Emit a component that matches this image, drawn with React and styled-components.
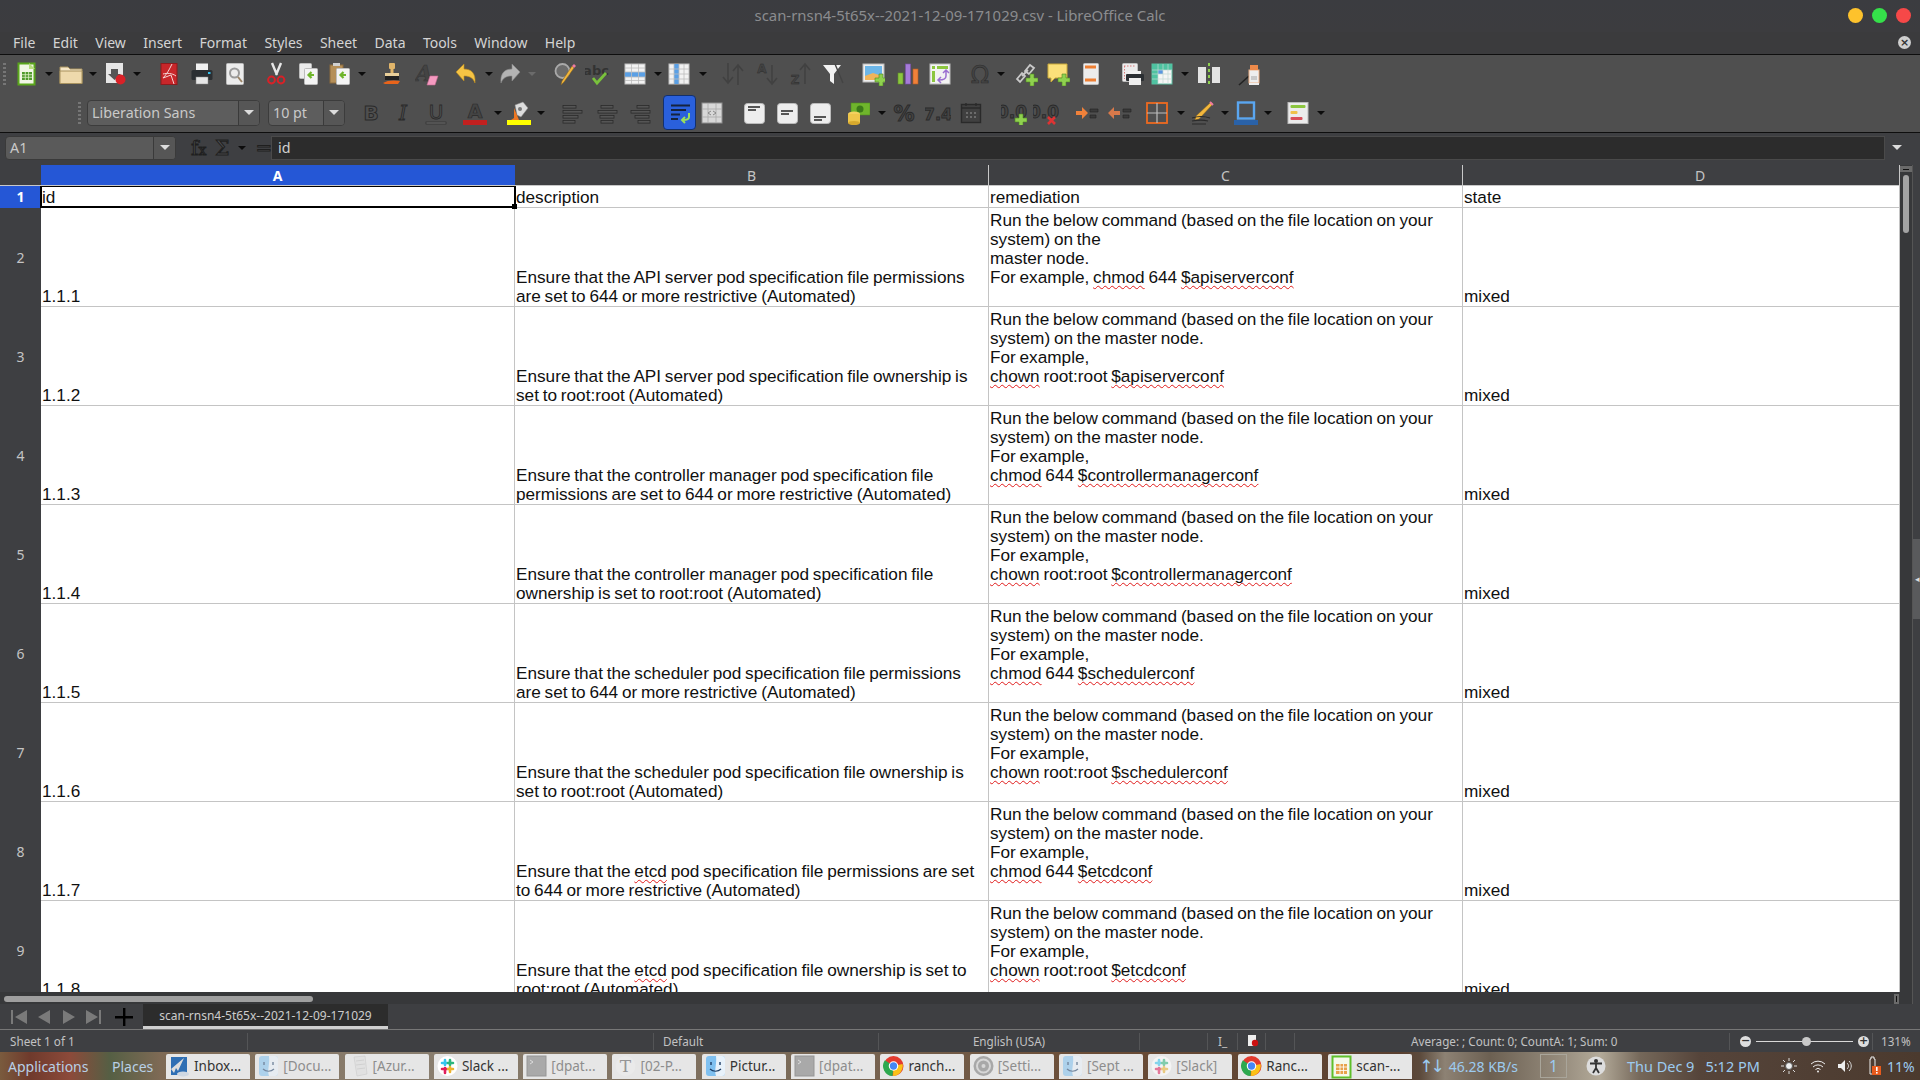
import React from 'react';
import styled, { createGlobalStyle } from 'styled-components';

const Global = createGlobalStyle`
  html, body { margin: 0; padding: 0; background: #3c3c3e; }
  body { font-family: "Noto Sans", "Open Sans", sans-serif; overflow: hidden; }
  * { box-sizing: border-box; }
`;

const Window = styled.div`
  width: 1920px;
  height: 1080px;
  display: flex;
  flex-direction: column;
  overflow: hidden;
  background: #3e3f42;
`;

/* ---------- title + menu ---------- */
const TitleBar = styled.div`
  height: 32px;
  flex: none;
  position: relative;
  display: flex;
  align-items: center;
  justify-content: center;
  padding-bottom: 2px;
  background: linear-gradient(#3b3c40, #3c3c3f);
  color: #8b8c8f;
  font-size: 14.9px;
`;
const Lights = styled.div`
  position: absolute;
  right: 9px;
  top: 8px;
  display: flex;
  gap: 9px;
`;
const Light = styled.span`
  width: 15px;
  height: 15px;
  border-radius: 50%;
  background: ${p => p.$c};
`;
const MenuBar = styled.div`
  height: 23px;
  flex: none;
  display: flex;
  align-items: center;
  gap: 17.4px;
  padding: 0 9px 1px 13px;
  background: #3b3b3d;
  border-bottom: 1px solid #0e0e0e;
  color: #d4d4d4;
  font-size: 14px;
`;
const CloseDoc = styled.span`
  margin-left: auto;
  width: 13px;
  height: 13px;
  border-radius: 50%;
  background: #cfcfcf;
  color: #333;
  font: bold 11px/13px "DejaVu Sans", sans-serif;
  text-align: center;
`;

/* ---------- toolbars ---------- */
const Toolbars = styled.div`
  flex: none;
  background: #4f4f4f;
  border-bottom: 1px solid #0e0e0e;
`;
const ToolRow = styled.div`
  height: ${p => p.$h}px;
  display: flex;
  align-items: center;
`;
const Slot = styled.div`
  flex: none;
  width: ${p => p.$w}px;
  height: 28px;
  margin-left: ${p => p.$ml}px;
  display: flex;
  align-items: center;
  justify-content: center;
`;
const Handle = styled.div`
  width: 3px;
  height: 22px;
  background-image: repeating-linear-gradient(#767676 0 2px, transparent 2px 4px);
`;
const Drop = styled.div`
  width: 0;
  height: 0;
  border-left: 4px solid transparent;
  border-right: 4px solid transparent;
  border-top: 4px solid ${p => p.$off ? '#6b6b6b' : '#0c0c0c'};
`;
const Combo = styled.div`
  width: 100%;
  height: 26px;
  display: flex;
  align-items: stretch;
  border: 1px solid #3c3c3c;
  border-radius: 4px;
  background: #5d5d5d;
  color: #c9c9c9;
  font-size: 14.3px;
  overflow: hidden;
`;
const ComboText = styled.div`
  flex: 1;
  display: flex;
  align-items: center;
  padding-left: ${p => p.$pad || 4}px;
`;
const ComboArrow = styled.div`
  flex: none;
  width: ${p => p.$w || 21}px;
  display: flex;
  align-items: center;
  justify-content: center;
  border-left: 1px solid #3a3a3a;
  background: #565656;
`;
const WhiteDown = styled.div`
  width: 0;
  height: 0;
  border-left: 5px solid transparent;
  border-right: 5px solid transparent;
  border-top: 5px solid #dcdcdc;
`;
const Active = styled.div`
  width: 33px;
  height: 35px;
  display: flex;
  align-items: center;
  justify-content: center;
  border-radius: 4px;
  border: 1px solid #12306e;
  background: #2a60dc;
`;

/* ---------- formula bar ---------- */
const FormulaBar = styled.div`
  height: 32px;
  flex: none;
  display: flex;
  align-items: center;
  padding: 0 0 3px 5px;
  background: #3e3f42;
`;
const NameBox = styled.div`
  width: 171px;
  height: 24px;
  flex: none;
  display: flex;
  border: 1px solid #3a3a3a;
  border-radius: 4px;
  background: #5a5a5a;
  color: #c9c9c9;
  font-size: 14.3px;
  overflow: hidden;
`;
const FormulaIcons = styled.div`
  width: 95px;
  flex: none;
  display: flex;
  align-items: center;
  padding-left: 15px;
  gap: 9px;
  font-family: "DejaVu Serif", serif;
  font-size: 20px;
`;
const Faint = styled.span`
  color: #4c4d50;
  -webkit-text-stroke: 1px #1f1f1f;
  & small { font-size: 14px; }
`;
const FormulaInput = styled.div`
  width: 1614px;
  height: 24px;
  flex: none;
  padding-left: 6px;
  background: #2c2c2c;
  border: 1px solid #4a4a4a;
  color: #d0d0d0;
  font-size: 14.3px;
  line-height: 22px;
`;
const FormulaDrop = styled.div`
  flex: 1;
  display: flex;
  justify-content: center;
  padding-right: 11px;
`;

/* ---------- sheet grid ---------- */
const Sheet = styled.div`
  flex: 1;
  min-height: 0;
  display: flex;
`;
const SheetMain = styled.div`
  width: 1900px;
  flex: none;
  display: flex;
  flex-direction: column;
`;
const HeaderRow = styled.div`
  height: 20px;
  flex: none;
  display: flex;
`;
const Corner = styled.div`
  width: 41px;
  flex: none;
`;
const ColHead = styled.div`
  width: ${p => p.$w}px;
  flex: none;
  display: flex;
  align-items: center;
  justify-content: center;
  padding-left: ${p => p.$shift || 0}px;
  background: ${p => p.$sel ? '#2557d6' : '#3e3f42'};
  color: ${p => p.$sel ? '#fff' : '#c4c4c4'};
  font-weight: ${p => p.$sel ? 700 : 400};
  font-size: 14px;
  border-right: 1px solid ${p => p.$sel ? '#2557d6' : '#c8c8c8'};
`;
const Rows = styled.div`
  flex: 1;
  min-height: 0;
  overflow: hidden;
  border-top: 1px solid #c8c8c8;
`;
const Row = styled.div`
  height: ${p => p.$h}px;
  display: flex;
`;
const RowHead = styled.div`
  width: 41px;
  flex: none;
  display: flex;
  align-items: center;
  justify-content: center;
  background: ${p => p.$sel ? '#2557d6' : '#3e3f42'};
  color: ${p => p.$sel ? '#fff' : '#c4c4c4'};
  font-weight: ${p => p.$sel ? 700 : 400};
  font-size: 14px;
`;
const Cell = styled.div`
  position: relative;
  width: ${p => p.$w}px;
  flex: none;
  display: flex;
  align-items: ${p => p.$top ? 'flex-start' : 'flex-end'};
  padding: ${p => p.$top ? '3px 2px 0 1px' : '0 2px 0 1px'};
  background: #fff;
  border-right: 1px solid #c4c4c4;
  border-bottom: 1px solid #c4c4c4;
  color: #101010;
  font-family: "Liberation Sans", Arial, sans-serif;
  font-size: 17.2px;
  word-spacing: -1px;
  line-height: 19px;
  white-space: pre-wrap;
`;
const Selected = styled.div`
  position: absolute;
  z-index: 2;
  inset: -1px -2px -1px -1px;
  border: 2px solid #000;
`;
const FillHandle = styled.div`
  position: absolute;
  right: -3px;
  bottom: -3px;
  width: 5px;
  height: 5px;
  background: #000;
`;
const Sq = styled.span`
  text-decoration: underline wavy #e01b1b 1px;
  text-decoration-skip-ink: none;
  text-underline-offset: 2px;
`;
const VScroll = styled.div`
  width: 12px;
  flex: none;
  display: flex;
  flex-direction: column;
  align-items: center;
  padding-top: 1px;
  background: #37383a;
`;
const VStop = styled.div`
  width: 12px;
  height: 6px;
  background: #6a6a6a;
  display: flex;
  align-items: center;
  justify-content: center;
  &::after { content: ''; width: 6px; height: 1px; background: #111; }
`;
const VThumb = styled.div`
  width: 6px;
  height: 58px;
  margin-top: 3px;
  border-radius: 3px;
  background: #a3a3a3;
`;
const SidePanel = styled.div`
  flex: 1;
  display: flex;
  align-items: center;
  padding-bottom: 12px;
  background: #3e3f42;
  border-left: 1px solid #555;
`;
const SideHandle = styled.div`
  width: 8px;
  height: 80px;
  display: flex;
  align-items: center;
  justify-content: center;
  background: #595a5c;
  color: #ddd;
  font-size: 9px;
`;

/* ---------- bottom bars ---------- */
const HScroll = styled.div`
  height: 12px;
  flex: none;
  display: flex;
  align-items: center;
  justify-content: space-between;
  padding: 2px 0 0 4px;
  background: #37383a;
`;
const HThumb = styled.div`
  width: 309px;
  height: 6px;
  border-radius: 3px;
  background: #9f9f9f;
`;
const HEnd = styled.div`
  width: 5px;
  height: 10px;
  margin-right: 1px;
  background: #6a6a6a;
  display: flex;
  align-items: center;
  justify-content: center;
  &::after { content: ''; width: 1px; height: 6px; background: #111; }
`;
const TabBar = styled.div`
  height: 25px;
  flex: none;
  display: flex;
  align-items: center;
  padding-left: 6px;
  background: #3e3f42;
`;
const NavSlot = styled.span`
  width: 25px;
  flex: none;
  display: flex;
  justify-content: center;
`;
const AddSheet = styled.span`
  flex: none;
  display: flex;
  margin-left: 8px;
`;
const Tab = styled.div`
  width: 245px;
  height: 25px;
  flex: none;
  margin-left: 9px;
  display: flex;
  align-items: center;
  justify-content: center;
  background: #2c2c2c;
  border-bottom: 3px solid #cfcfcf;
  color: #cdcdcd;
  font-size: 12px;
`;
const StatusBar = styled.div`
  height: 23px;
  flex: none;
  display: flex;
  align-items: center;
  border-top: 1px solid #777;
  background: #3e3f42;
  color: #c2c2c2;
  font-size: 11.7px;
`;
const StatusCell = styled.div`
  width: ${p => p.$w}px;
  height: 17px;
  flex: none;
  display: flex;
  align-items: center;
  justify-content: ${p => p.$align || 'flex-start'};
  padding-left: ${p => p.$pad || 0}px;
  border-right: ${p => p.$last ? 'none' : '1px solid #545557'};
`;
const ZoomRound = styled.span`
  width: 11px;
  height: 11px;
  flex: none;
  border-radius: 50%;
  background: #dedede;
  color: #333;
  font: bold 11px/10px "DejaVu Sans", sans-serif;
  text-align: center;
`;
const ZoomTrack = styled.span`
  position: relative;
  width: 97px;
  height: 1px;
  margin: 0 5px;
  background: #d8d8d8;
`;
const ZoomThumb = styled.span`
  position: absolute;
  left: 46px;
  top: -4px;
  width: 9px;
  height: 9px;
  border-radius: 50%;
  background: #c8c8c8;
`;

/* ---------- desktop panel ---------- */
const Panel = styled.div`
  height: 28px;
  flex: none;
  display: flex;
  align-items: center;
  padding-left: 8px;
  color: #b8d0e6;
  font-size: 14px;
  background: linear-gradient(90deg,
    #7a5b3e 0, #6f3a2c 30px, #8c4a3a 70px, #555f44 110px, #7e6a55 160px,
    #8a7f70 400px, #7a6a58 800px, #6a4c36 1100px, #5a4030 1400px,
    #5c4a3c 1420px, #8d8274 1445px, #6c6052 1490px, #958b7c 1560px,
    #b3aa99 1600px, #75685a 1640px, #55443a 1700px, #4b3a2e 1920px);
`;
const PanelLabel = styled.span`
  flex: none;
  width: ${p => p.$w}px;
`;
const Task = styled.div`
  width: 84px;
  height: 25px;
  flex: none;
  margin-left: ${p => p.$ml}px;
  display: flex;
  align-items: center;
  gap: 4px;
  padding-left: 3px;
  border-radius: 2px 2px 0 0;
  background: #e6e6e6;
  color: ${p => p.$dim ? '#8d8d8d' : '#333'};
  font-size: 13.5px;
  white-space: nowrap;
  overflow: hidden;
`;
const TaskIcon = styled.span`
  width: 21px;
  height: 22px;
  flex: none;
  display: flex;
  opacity: ${p => p.$dim ? 0.55 : 1};
`;
const Tray = styled.div`
  flex: 1;
  display: flex;
  align-items: center;
  color: #9ccbf0;
  font-size: 15.5px;
`;
const TrayItem = styled.span`
  flex: none;
  margin-left: ${p => p.$ml}px;
  display: flex;
  align-items: center;
  white-space: nowrap;
  font-size: ${p => p.$size || 15.5}px;
`;
const Arrows = styled.span`
  font-family: "DejaVu Sans", sans-serif;
  font-size: 17px;
  letter-spacing: -3px;
  margin-right: 7px;
`;
const Workspace = styled.span`
  width: 27px;
  height: 24px;
  flex: none;
  margin-left: 22px;
  border: 1px solid #a9a59a;
  text-align: center;
  line-height: 22px;
`;

/* ---------- icons ---------- */
const Svg = ({ children, w = 24, h = 24 }) => (
  <svg width={w} height={h} viewBox={`0 0 ${w} ${h}`} fill="none">{children}</svg>
);
const Plus = ({ x, y }) => (
  <path d={`M${x - 2} ${y - 6}h4v4h4v4h-4v4h-4v-4h-4v-4h4z`} fill="#8fd14f" stroke="#4d8c1e" strokeWidth=".6" />
);
const Paper = ({ x = 5, y = 2, w = 14, h = 20, fill = '#ececec' }) => (
  <rect x={x + .5} y={y + .5} width={w} height={h} rx="1" fill={fill} stroke="#bdbdbd" />
);
const AlignLines = ({ v }) => {
  const xs = { l: [[4, 13], [4, 19], [4, 15], [4, 12]], c: [[7, 12], [4, 19], [6, 14], [7, 12]], r: [[10, 12], [4, 19], [8, 14], [11, 12]] }[v];
  return (
    <Svg>
      {xs.map(([x, w], i) => (
        <rect key={i} x={x} y={4.5 + i * 5} width={w} height="2.6" fill="#555" stroke="#2b2b2b" strokeWidth=".8" />
      ))}
    </Svg>
  );
};
const VAlign = ({ ys }) => (
  <Svg>
    <rect x="2.5" y="2.5" width="20" height="20" rx="3" fill="#ededed" stroke="#bbb" />
    <rect x="6" y={ys} width="12" height="2" fill="#555" />
    <rect x="6" y={ys + 3} width="8" height="2" fill="#555" />
  </Svg>
);
const Glyph = ({ t, size = 22, y = 19, x = 12, style, font = 'DejaVu Sans', weight = 'bold' }) => (
  <text x={x} y={y} textAnchor="middle" fontFamily={font} fontSize={size} fontWeight={weight} fontStyle={style}
    fill="#444" stroke="#2a2a2a" strokeWidth=".9">{t}</text>
);
const ArrowVert = ({ x, up }) => (
  <path d={up ? `M${x} 23V3M${x - 5} 9l5-6 5 6` : `M${x} 1v20M${x - 5} 15l5 6 5-6`} stroke="#414141" strokeWidth="1.6" />
);

const Icons = {
  newCalc: <Svg><rect x="3.5" y="1.5" width="16" height="21" fill="#f2f7e6" stroke="#5aa61c" strokeWidth="2" /><path d="M14 1l6 6h-6z" fill="#b6dd7e" /><rect x="7" y="10" width="10" height="8" fill="#4f9a2c" /><path d="M7 12.7h10M7 15.3h10M10.3 10v8M13.6 10v8" stroke="#dff0c8" strokeWidth=".8" /></Svg>,
  open: <Svg><path d="M1 5h8l2 2h12v14.5H1z" fill="#f5e6c6" stroke="#a8925f" /><path d="M1 9h22v12.5H1z" fill="#eed9ac" stroke="#a8925f" /></Svg>,
  save: <Svg><rect x="2" y="1" width="17" height="20" fill="#e6e6e6" /><path d="M7 7h7v5h3l-6.5 6L4 12h3z" fill="#555" /><circle cx="16.5" cy="17.5" r="5" fill="#d92127" /></Svg>,
  pdf: <Svg><rect x="4" y="1.5" width="16" height="21" fill="#c8262a" stroke="#8d1a1d" /><path d="M15 2c-3 6-5 10-9 14l8-3 3 9M6 12c4-1 9-1 13 2" stroke="#f4d5d5" strokeWidth="1" /></Svg>,
  print: <Svg><rect x="6" y="1.5" width="12" height="8" fill="#f1f1f1" /><rect x="1.5" y="8" width="21" height="10" rx="1.5" fill="#2b2f33" /><rect x="18" y="10" width="2.5" height="2" fill="#35c0ee" /><rect x="6" y="15" width="12" height="7" fill="#e7e7e7" stroke="#888" strokeWidth=".5" /></Svg>,
  preview: <Svg><Paper x={3} y={1} w={17} h={21} /><circle cx="11.5" cy="11" r="4.5" stroke="#9a9a9a" strokeWidth="2" /><path d="M15 15l4 5" stroke="#9b8466" strokeWidth="2" /></Svg>,
  cut: <Svg><path d="M8 1l5 12M17 1l-5 12" stroke="#e8e8e8" strokeWidth="2.4" /><circle cx="7.5" cy="18" r="3.4" stroke="#d92127" strokeWidth="2" /><circle cx="17" cy="18" r="3.4" stroke="#d92127" strokeWidth="2" /></Svg>,
  copy: <Svg><Paper x={2} y={1} w={12} h={15} /><Paper x={7} y={6} w={13} h={16} fill="#f4f4f4" /><path d="M17 13h-5m2.5-3l-3 3 3 3" stroke="#6fb52c" strokeWidth="2.2" /></Svg>,
  paste: <Svg><rect x="2" y="3" width="13" height="18" fill="#b58f58" stroke="#8a6b3f" /><rect x="5" y="1" width="7" height="3" fill="#d0d0d0" /><Paper x={8} y={6} w={13} h={16} fill="#f4f4f4" /><path d="M18 13h-5m2.5-3l-3 3 3 3" stroke="#6fb52c" strokeWidth="2.2" /></Svg>,
  clone: <Svg><rect x="9" y="1" width="6" height="6" rx="1" fill="#e0b56a" /><rect x="10.5" y="6" width="3" height="6" fill="#e0b56a" /><rect x="5" y="11" width="14" height="3" fill="#e9cf9a" /><rect x="5" y="14" width="14" height="4" fill="#222" /><path d="M3 21c4-3 12-3 17-2l-2 3H5z" fill="#e8641b" /></Svg>,
  clear: <Svg><text x="9" y="19" textAnchor="middle" fontFamily="DejaVu Serif" fontStyle="italic" fontWeight="bold" fontSize="22" fill="#444" stroke="#333" strokeWidth=".5">A</text><path d="M15 14h8l-3 9h-8z" fill="#f59ac0" stroke="#c26a91" strokeWidth=".6" /></Svg>,
  undo: <Svg><path d="M2 10l8-8v5c7 0 12 4 11 14-2-5-5-7-11-7v5z" fill="#f5c344" stroke="#b98a1e" strokeWidth=".6" /></Svg>,
  redo: <Svg><path d="M22 10l-8-8v5C7 7 2 11 3 21c2-5 5-7 11-7v5z" fill="#b4b4b4" stroke="#8a8a8a" strokeWidth=".6" /></Svg>,
  find: <Svg><circle cx="9.5" cy="9" r="7" fill="#6b6b6b" stroke="#a9a9a9" strokeWidth="1.8" /><path d="M21 6L11 20l-3 3 1-4L19 4z" fill="#f3b73c" stroke="#7f5f1f" strokeWidth=".5" /><path d="M19 4l2 2 2-2-2-2z" fill="#ee7aa0" /></Svg>,
  spell: <Svg><text x="11" y="13" textAnchor="middle" fontFamily="DejaVu Sans" fontWeight="bold" fontSize="13" fill="#333">abc</text><path d="M8 16l4 5 9-10" stroke="#79c13c" strokeWidth="2.8" /></Svg>,
  rows: <Svg><rect x="2" y="2" width="20" height="20" fill="#f2f2f2" stroke="#c0c0c0" /><rect x="2" y="10" width="20" height="5" fill="#5aa0e6" /><path d="M2 6h20M2 10h20M2 15h20M2 18.5h20M8.5 2v20M15.5 2v20" stroke="#bdbdbd" strokeWidth=".8" /></Svg>,
  cols: <Svg><rect x="2" y="2" width="20" height="20" fill="#f2f2f2" stroke="#c0c0c0" /><rect x="7" y="2" width="5" height="20" fill="#5aa0e6" /><path d="M7 2v20M12 2v20M17 2v20M2 7h20M2 12h20M2 17h20" stroke="#bdbdbd" strokeWidth=".8" /></Svg>,
  sort: <Svg><ArrowVert x={7} /><ArrowVert x={17} up /></Svg>,
  az: <Svg><text x="7" y="11" textAnchor="middle" fontFamily="DejaVu Sans" fontWeight="bold" fontSize="12" fill="#444" stroke="#2a2a2a" strokeWidth=".4">A</text><path d="M17 3v19m-5-6l5 6 5-6" stroke="#414141" strokeWidth="1.6" /></Svg>,
  za: <Svg><text x="7" y="22" textAnchor="middle" fontFamily="DejaVu Sans" fontWeight="bold" fontSize="12" fill="#444" stroke="#2a2a2a" strokeWidth=".4">Z</text><path d="M17 22V2m-5 6l5-6 5 6" stroke="#414141" strokeWidth="1.6" /></Svg>,
  filter: <Svg><path d="M2 3h18l-7 9v10l-4-3v-7z" fill="#f2f2f2" /><path d="M14 2l8 19" stroke="#444" strokeWidth="1.4" /></Svg>,
  image: <Svg><rect x="2" y="2" width="21" height="18" fill="#eee" stroke="#bbb" /><rect x="4" y="4" width="17" height="14" fill="#6cb6e8" /><path d="M4 14l8-3 9 3v4H4z" fill="#f0b45a" /><Plus x={20} y={18} /></Svg>,
  chart: <Svg><rect x="2" y="11" width="5" height="11" fill="#8cc63f" stroke="#5f8f23" strokeWidth=".6" /><rect x="9.5" y="2" width="5" height="20" fill="#a67bd8" stroke="#7951ad" strokeWidth=".6" /><rect x="17" y="7" width="5" height="15" fill="#f0813a" stroke="#b85c22" strokeWidth=".6" /></Svg>,
  pivot: <Svg><rect x="2" y="2" width="20" height="20" fill="#f2f2f2" stroke="#bbb" /><rect x="9" y="4" width="11" height="3" fill="#8cc63f" /><rect x="4" y="4" width="3" height="3" fill="#8cc63f" /><rect x="4" y="9" width="3" height="11" fill="#8cc63f" /><path d="M18 9v5c0 3-3 4-7 4m2-3l-3 3 3 3M15 11l3-3 3 3" stroke="#9b6fd0" strokeWidth="1.5" /></Svg>,
  omega: <Svg><text x="12" y="21" textAnchor="middle" fontFamily="DejaVu Sans" fontSize="24" fill="#444" stroke="#2d2d2d" strokeWidth=".6">Ω</text></Svg>,
  link: <Svg><path d="M3 17l5-6 3 3-5 6zM11 9l5-6 4 3-5 6zM8 14l6-6" stroke="#c9c9c9" strokeWidth="1.8" /><Plus x={18} y={18} /></Svg>,
  comment: <Svg><path d="M2 2h19v14H9l-4 4v-4H2z" fill="#fbe07a" stroke="#c9a93a" /><Plus x={18} y={18} /></Svg>,
  header: <Svg><Paper x={4} y={1} w={15} h={21} /><rect x="6" y="3.5" width="11" height="3" fill="#ee7f33" /><rect x="6" y="16.5" width="11" height="3" fill="#ee7f33" /></Svg>,
  printArea: <Svg><Paper x={1} y={1} w={15} h={18} /><path d="M3 4h11M3.5 4v13" stroke="#d97a7a" strokeDasharray="1.5 1.5" /><rect x="7" y="9" width="13" height="4" fill="#f1f1f1" /><rect x="5" y="12" width="18" height="7" rx="1" fill="#2b2f33" /><rect x="8" y="16" width="12" height="7" fill="#eee" /></Svg>,
  freeze: <Svg><rect x="2" y="2" width="20" height="20" fill="#f5f5f5" stroke="#5cc0a4" /><rect x="2" y="2" width="20" height="6" fill="#4fc3a1" /><rect x="2" y="2" width="6" height="20" fill="#4fc3a1" /><rect x="8" y="8" width="5" height="4" fill="#5a96e0" /><path d="M8 2v20M13 2v20M18 2v20M2 8h20M2 12h20M2 17h20" stroke="#c2d8d2" strokeWidth=".7" /></Svg>,
  split: <Svg><rect x="1" y="5" width="8" height="16" fill="#e3e3e3" /><rect x="15" y="5" width="8" height="16" fill="#e3e3e3" /><path d="M12 1v22" stroke="#8fd14f" strokeWidth="2" strokeDasharray="3 3" /></Svg>,
  form: <Svg><path d="M1 23l10-9" stroke="#222" strokeWidth="1.6" /><rect x="11" y="8" width="10" height="13" fill="#eee" stroke="#f0b48a" /><rect x="12" y="3" width="8" height="5" fill="#ee8a4a" /><rect x="13" y="14" width="6" height="4" fill="#c9c9c9" /><rect x="11" y="21" width="10" height="2" fill="#eee" /></Svg>,
  fontColor: <Svg><text x="12" y="17" textAnchor="middle" fontFamily="DejaVu Sans" fontWeight="bold" fontSize="19" fill="#444" stroke="#2a2a2a" strokeWidth=".7">A</text><rect y="19" width="24" height="5" fill="#c2201f" /></Svg>,
  bgColor: <Svg><path d="M8 4l8-3 5 6-7 9-4-2z" fill="#ddd" stroke="#888" strokeWidth=".5" /><circle cx="13" cy="8" r="2" fill="#777" /><path d="M7 7v10l-3 2h8z" fill="#ee7722" /><rect y="19" width="24" height="5" fill="#ffff00" /></Svg>,
  alignL: <AlignLines v="l" />,
  alignC: <AlignLines v="c" />,
  alignR: <AlignLines v="r" />,
  wrap: <Svg><path d="M3 4.5h19M3 9h15M3 13.5h9M3 18h7" stroke="#15233f" strokeWidth="2" /><path d="M21 12v4c0 2-2 3-6 3m2-3l-3 3 3 3" stroke="#9be05a" strokeWidth="2" /></Svg>,
  merge: <Svg><rect x="2" y="2" width="20" height="20" fill="#d8d8d8" stroke="#8f8f8f" /><path d="M2 8h20M2 16h20M8 2v20M16 2v20" stroke="#aaa" strokeWidth=".8" /><path d="M11 10l-3 2 3 2M13 10l3 2-3 2" stroke="#888" strokeWidth="1" /></Svg>,
  vTop: <VAlign ys={5} />,
  vMid: <VAlign ys={9} />,
  vBot: <VAlign ys={15} />,
  currency: <Svg><rect x="5" y="2" width="19" height="12" fill="#6fb52c" stroke="#4d8c1e" strokeWidth=".6" /><circle cx="14" cy="8" r="3.5" fill="#3c7a19" /><ellipse cx="8" cy="13" rx="6" ry="2.5" fill="#f3d15f" /><rect x="2" y="13" width="12" height="9" fill="#eec64a" /><ellipse cx="8" cy="22" rx="6" ry="2" fill="#d7a92d" /></Svg>,
  percent: <Svg><Glyph t="%" size={21} y={20} /></Svg>,
  number: <Svg w={26}><Glyph t="7.4" size={16} y={19} x={13} /></Svg>,
  date: <Svg><rect x="2.5" y="3.5" width="19" height="18" fill="#404040" stroke="#2a2a2a" strokeWidth="1.4" /><path d="M2.5 7h19M7 2v3M17 2v3" stroke="#2a2a2a" strokeWidth="1.4" /><path d="M7 12h2M11 12h2M15 12h2M7 16h2M11 16h2M15 16h2" stroke="#7a7a7a" strokeWidth="1.6" /></Svg>,
  decAdd: <Svg w={26}><Glyph t="0.0" size={17} y={17} x={11} /><Plus x={20} y={19} /></Svg>,
  decDel: <Svg w={26}><Glyph t="0.0" size={17} y={17} x={11} /><path d="M15 16l7 7m0-7l-7 7" stroke="#d33" strokeWidth="2.6" /></Svg>,
  indent: <Svg><path d="M1 10h6V6l6 6-6 6v-4H1z" fill="#f0813a" /><path d="M15 8h8v3h-8zM15 14h6v3h-6z" fill="#3a3a3a" stroke="#222" strokeWidth=".6" /></Svg>,
  outdent: <Svg><path d="M12 10H6V6l-6 6 6 6v-4h6z" fill="#d9794a" /><path d="M15 8h8v3h-8zM15 14h6v3h-6z" fill="#3a3a3a" stroke="#222" strokeWidth=".6" /></Svg>,
  borders: <Svg><rect x="2" y="2" width="20" height="20" fill="#4f4f4f" stroke="#ee6a20" strokeWidth="1.8" /><path d="M12 2v20M2 12h20" stroke="#bdbdbd" strokeWidth="1.2" /></Svg>,
  lineStyle: <Svg><path d="M21 1l2 2-14 15-4 1 1-4z" fill="#f3b73c" stroke="#7f5f1f" strokeWidth=".5" /><path d="M20 1l3 3" stroke="#ee7aa0" strokeWidth="2" /><path d="M2 17c6-2 12-2 18 0M2 20c6-1 12-1 16 0M2 23h14" stroke="#2a2a2a" strokeWidth="1.2" /></Svg>,
  borderColor: <Svg><rect x="4" y="1.5" width="16" height="16" fill="#4f4f4f" stroke="#5aa6f0" strokeWidth="2.4" /><rect y="19" width="24" height="5" fill="#2a62a8" /></Svg>,
  cond: <Svg><rect x="2" y="1.5" width="20" height="21" fill="#ececec" stroke="#bbb" /><rect x="4.5" y="4" width="15" height="3" rx="1" fill="#8cc63f" /><rect x="4.5" y="10" width="7" height="3" rx="1" fill="#f0c24a" /><rect x="4.5" y="16" width="12" height="3" rx="1" fill="#d9505a" /></Svg>,
};

const wrapUp = (rows) => {
  let right = 0;
  return rows.map(r => {
    const [el, x, w = 24] = r;
    const left = x - w / 2;
    const ml = left - right;
    right = left + w;
    return { el, ml, w };
  });
};

const I = name => Icons[name];
const D = (off) => <Drop $off={off} />;

const rowOne = wrapUp([
  [<Handle />, 4, 4], [I('newCalc'), 27], [D(), 49, 8], [I('open'), 71], [D(), 93, 8], [I('save'), 116], [D(), 137, 8],
  [I('pdf'), 169], [I('print'), 202], [I('preview'), 235], [I('cut'), 276], [I('copy'), 309], [I('paste'), 340], [D(), 362, 8],
  [I('clone'), 392], [I('clear'), 427], [I('undo'), 466], [D(), 489, 8], [I('redo'), 510], [D(true), 532, 8],
  [I('find'), 565], [I('spell'), 597], [I('rows'), 635], [D(), 658, 8], [I('cols'), 679], [D(), 703, 8],
  [I('sort'), 733], [I('az'), 767], [I('za'), 800], [I('filter'), 833], [I('image'), 873], [I('chart'), 908], [I('pivot'), 940],
  [I('omega'), 980], [D(), 1001, 8], [I('link'), 1026], [I('comment'), 1058], [I('header'), 1091], [I('printArea'), 1133],
  [I('freeze'), 1162], [D(), 1185, 8], [I('split'), 1209], [I('form'), 1250],
]);

const fontCombo = (
  <Combo>
    <ComboText>Liberation Sans</ComboText>
    <ComboArrow><WhiteDown /></ComboArrow>
  </Combo>
);
const sizeCombo = (
  <Combo>
    <ComboText>10 pt</ComboText>
    <ComboArrow><WhiteDown /></ComboArrow>
  </Combo>
);
const boldIcon = <Svg><text x="12" y="19" textAnchor="middle" fontFamily="DejaVu Sans" fontWeight="bold" fontSize="20" fill="#4f4f4f" stroke="#2a2a2a" strokeWidth="1">B</text></Svg>;
const italicIcon = <Svg><text x="12" y="19" textAnchor="middle" fontFamily="DejaVu Serif" fontStyle="italic" fontSize="20" fill="#4f4f4f" stroke="#2a2a2a" strokeWidth=".9">I</text></Svg>;
const underIcon = <Svg><text x="12" y="18" textAnchor="middle" fontFamily="DejaVu Sans" fontSize="20" fill="#4f4f4f" stroke="#2a2a2a" strokeWidth=".8">U</text><rect x="2" y="21" width="20" height="2" fill="#666" stroke="#2a2a2a" strokeWidth=".6" /></Svg>;

const rowTwo = wrapUp([
  [<Handle />, 79, 4], [fontCombo, 173.5, 173], [sizeCombo, 306.5, 77],
  [boldIcon, 371], [italicIcon, 403], [underIcon, 436], [I('fontColor'), 475], [D(), 498, 8], [I('bgColor'), 519], [D(), 541, 8],
  [I('alignL'), 571], [I('alignC'), 606], [I('alignR'), 639],
  [<Active>{I('wrap')}</Active>, 679.5, 33], [I('merge'), 712], [I('vTop'), 754], [I('vMid'), 787], [I('vBot'), 820],
  [I('currency'), 858], [D(), 882, 8], [I('percent'), 904], [I('number'), 938, 26], [I('date'), 971], [I('decAdd'), 1014, 26], [I('decDel'), 1046, 26],
  [I('indent'), 1087], [I('outdent'), 1120], [I('borders'), 1157], [D(), 1181, 8], [I('lineStyle'), 1202], [D(), 1225, 8],
  [I('borderColor'), 1246], [D(), 1268, 8], [I('cond'), 1298], [D(), 1321, 8],
]);

/* ---------- data ---------- */
const MENUS = ['File', 'Edit', 'View', 'Insert', 'Format', 'Styles', 'Sheet', 'Data', 'Tools', 'Window', 'Help'];
const COLS = [['A', 474, true], ['B', 474], ['C', 474], ['D', 437, false, 38]];
const INTRO = 'Run the below command (based on the file location on your system) on the master node.\nFor example,\n';

const chmod = conf => <><Sq>chmod</Sq> 644 <Sq>{conf}</Sq></>;
const chown = conf => <><Sq>chown</Sq> root:root <Sq>{conf}</Sq></>;

const ROWS = [
  { id: '1.1.1', desc: 'Ensure that the API server pod specification file permissions are set to 644 or more restrictive (Automated)',
    rem: <>{'Run the below command (based on the file location on your system) on the\nmaster node.\nFor example, '}{chmod('$apiserverconf')}</> },
  { id: '1.1.2', desc: 'Ensure that the API server pod specification file ownership is set to root:root (Automated)', rem: <>{INTRO}{chown('$apiserverconf')}</> },
  { id: '1.1.3', desc: 'Ensure that the controller manager pod specification file permissions are set to 644 or more restrictive (Automated)', rem: <>{INTRO}{chmod('$controllermanagerconf')}</> },
  { id: '1.1.4', desc: 'Ensure that the controller manager pod specification file ownership is set to root:root (Automated)', rem: <>{INTRO}{chown('$controllermanagerconf')}</> },
  { id: '1.1.5', desc: 'Ensure that the scheduler pod specification file permissions are set to 644 or more restrictive (Automated)', rem: <>{INTRO}{chmod('$schedulerconf')}</> },
  { id: '1.1.6', desc: 'Ensure that the scheduler pod specification file ownership is set to root:root (Automated)', rem: <>{INTRO}{chown('$schedulerconf')}</> },
  { id: '1.1.7', desc: <>Ensure that the <Sq>etcd</Sq> pod specification file permissions are set to 644 or more restrictive (Automated)</>, rem: <>{INTRO}{chmod('$etcdconf')}</> },
  { id: '1.1.8', desc: <>Ensure that the <Sq>etcd</Sq> pod specification file ownership is set to root:root (Automated)</>, rem: <>{INTRO}{chown('$etcdconf')}</> },
];

/* ---------- task icons ---------- */
const slack = <Svg w={21} h={22}><circle cx="10.5" cy="11" r="10" fill="#fff" /><path d="M8 5v5M5 8h5" stroke="#36c5f0" strokeWidth="2.6" strokeLinecap="round" /><path d="M13 5v5M11 8h5" stroke="#2eb67d" strokeWidth="2.6" strokeLinecap="round" /><path d="M8 13v5M5 14h5" stroke="#e01e5a" strokeWidth="2.6" strokeLinecap="round" /><path d="M13 12v5M11 14h5" stroke="#ecb22e" strokeWidth="2.6" strokeLinecap="round" /></Svg>;
const finder = <Svg w={21} h={22}><rect x="1" y="1" width="19" height="20" rx="3" fill="#7fc0f0" /><path d="M10.5 1h6.5a3 3 0 0 1 3 3v14a3 3 0 0 1-3 3h-6c-2-6 1-12 0-20z" fill="#e8f2fb" /><path d="M5 14c3 3 8 3 11 0" stroke="#1c3d66" strokeWidth="1.2" /><path d="M6 7v3M15 7v3" stroke="#1c3d66" strokeWidth="1.4" /></Svg>;
const chrome = <Svg w={22} h={22}><circle cx="11" cy="11" r="10.5" fill="#e33b2e" /><path d="M11 11l9.5-2a10.5 10.5 0 0 1-10 12.5z" fill="#fbc116" /><path d="M11 11l-1 10.5A10.5 10.5 0 0 1 2 5z" fill="#2da94f" /><circle cx="11" cy="11" r="5" fill="#fff" /><circle cx="11" cy="11" r="3.8" fill="#4587f4" /></Svg>;
const term = <Svg w={21} h={22}><rect x="1" y="1" width="19" height="20" fill="#777" stroke="#555" /><path d="M4 5l3 2-3 2" stroke="#ddd" strokeWidth=".9" /></Svg>;
const mail = <Svg w={21} h={22}><rect x="2" y="2" width="16" height="18" fill="#2f6fb4" /><path d="M2 14L15 3l-6 13-2-3-2 5z" fill="#ddd" /><ellipse cx="14" cy="19" rx="6" ry="2.5" fill="#cfd8e2" /></Svg>;
const page = <Svg w={21} h={22}><path d="M6 2l11-1 2 18-10 2z" fill="#ddd" stroke="#aaa" strokeWidth=".5" /><path d="M8 6l8-1M8 10l9-1M9 14l8-1" stroke="#aaa" strokeWidth=".6" /></Svg>;
const textT = <Svg w={21} h={22}><circle cx="10.5" cy="11" r="10" fill="#eee" /><text x="10.5" y="17" textAnchor="middle" fontFamily="DejaVu Serif" fontSize="17" fill="#555">T</text></Svg>;
const gear = <Svg w={21} h={22}><circle cx="10.5" cy="11" r="10" fill="#777" /><circle cx="10.5" cy="11" r="6.5" stroke="#ccc" strokeWidth="2" /><circle cx="10.5" cy="11" r="2" fill="#ccc" /></Svg>;
const calc = <Svg w={21} h={24}><rect x="1.5" y="1.5" width="18" height="21" fill="#f5f9ea" stroke="#5fbf2a" strokeWidth="2" /><rect x="5" y="9" width="11" height="10" fill="#e7a24a" /><path d="M5 12h11M5 15.5h11M9 9v10M12.5 9v10" stroke="#fff" strokeWidth=".8" /></Svg>;

const TASKS = [
  { icon: mail, label: 'Inbox...', ml: 0 },
  { icon: finder, label: '[Docu...', dim: true, ml: 5.3 },
  { icon: page, label: '[Azur...', dim: true, ml: 5.3 },
  { icon: slack, label: 'Slack ...', ml: 5.3 },
  { icon: term, label: '[dpat...', dim: true, ml: 5.3 },
  { icon: textT, label: '[02-P...', dim: true, ml: 5.3 },
  { icon: finder, label: 'Pictur...', ml: 5.3 },
  { icon: term, label: '[dpat...', dim: true, ml: 5.3 },
  { icon: chrome, label: 'ranch...', ml: 5.3 },
  { icon: gear, label: '[Setti...', dim: true, ml: 5.3 },
  { icon: finder, label: '[Sept ...', dim: true, ml: 5.3 },
  { icon: slack, label: '[Slack]', dim: true, ml: 5.3 },
  { icon: chrome, label: 'Ranc...', ml: 6 },
  { icon: calc, label: 'scan-...', ml: 6 },
];

const NavIcon = ({ d }) => (
  <NavSlot>
    <svg width="22" height="20" viewBox="0 0 22 20"><path d={d} fill="#7a7a7a" /></svg>
  </NavSlot>
);

const StatusDoc = () => (
  <svg width="12" height="12" viewBox="0 0 12 12"><rect x="1" y="0" width="8" height="11" fill="#eee" /><circle cx="8" cy="8" r="3.2" fill="#c11" /></svg>
);

export default function App() {
  return (
    <Window>
      <Global />
      <TitleBar>
        scan-rnsn4-5t65x--2021-12-09-171029.csv - LibreOffice Calc
        <Lights>
          <Light $c="#fdc22c" />
          <Light $c="#35e04a" />
          <Light $c="#f64848" />
        </Lights>
      </TitleBar>
      <MenuBar>
        {MENUS.map(m => <span key={m}>{m}</span>)}
        <CloseDoc>×</CloseDoc>
      </MenuBar>

      <Toolbars>
        <ToolRow $h={38}>
          {rowOne.map((it, i) => <Slot key={i} $w={it.w} $ml={it.ml}>{it.el}</Slot>)}
        </ToolRow>
        <ToolRow $h={39}>
          {rowTwo.map((it, i) => <Slot key={i} $w={it.w} $ml={it.ml}>{it.el}</Slot>)}
        </ToolRow>
      </Toolbars>

      <FormulaBar>
        <NameBox>
          <ComboText $pad={4}>A1</ComboText>
          <ComboArrow $w={22}><WhiteDown /></ComboArrow>
        </NameBox>
        <FormulaIcons>
          <Faint>f<small>x</small></Faint>
          <Faint>Σ</Faint>
          <Drop />
          <Faint>=</Faint>
        </FormulaIcons>
        <FormulaInput>id</FormulaInput>
        <FormulaDrop><WhiteDown /></FormulaDrop>
      </FormulaBar>

      <Sheet>
        <SheetMain>
          <HeaderRow>
            <Corner />
            {COLS.map(([n, w, sel, shift]) => <ColHead key={n} $w={w} $sel={sel} $shift={shift}>{n}</ColHead>)}
          </HeaderRow>
          <Rows>
            <Row $h={21.5}>
              <RowHead $sel>1</RowHead>
              <Cell $w={474}>
                id
                <Selected><FillHandle /></Selected>
              </Cell>
              <Cell $w={474}>description</Cell>
              <Cell $w={474}>remediation</Cell>
              <Cell $w={437}>state</Cell>
            </Row>
            {ROWS.map((r, i) => (
              <Row key={r.id} $h={99.1}>
                <RowHead>{i + 2}</RowHead>
                <Cell $w={474}>{r.id}</Cell>
                <Cell $w={474}><div>{r.desc}</div></Cell>
                <Cell $w={474} $top><div>{r.rem}</div></Cell>
                <Cell $w={437}>mixed</Cell>
              </Row>
            ))}
          </Rows>
          <HScroll>
            <HThumb />
            <HEnd />
          </HScroll>
        </SheetMain>
        <VScroll>
          <VStop />
          <VThumb />
        </VScroll>
        <SidePanel>
          <SideHandle>◂</SideHandle>
        </SidePanel>
      </Sheet>

      <TabBar>
        <NavIcon d="M3 3h2v14H3zM19 3v14L7 10z" />
        <NavIcon d="M17 3v14L5 10z" />
        <NavIcon d="M5 3v14l12-7z" />
        <NavIcon d="M3 3v14l12-7zM16 3h2v14h-2z" />
        <AddSheet>
          <svg width="20" height="20" viewBox="0 0 20 20"><path d="M9 1h2.4v8H19v2.4h-7.6V19H9v-7.6H1V9h8z" fill="#000" /></svg>
        </AddSheet>
        <Tab>scan-rnsn4-5t65x--2021-12-09-171029</Tab>
      </TabBar>

      <StatusBar>
        <StatusCell $w={248} $pad={10}>Sheet 1 of 1</StatusCell>
        <StatusCell $w={406} />
        <StatusCell $w={225} $pad={9}>Default</StatusCell>
        <StatusCell $w={261} $align="center">English (USA)</StatusCell>
        <StatusCell $w={68} />
        <StatusCell $w={30} $pad={10}>I_</StatusCell>
        <StatusCell $w={28} $pad={9}><StatusDoc /></StatusCell>
        <StatusCell $w={29} />
        <StatusCell $w={435} $pad={116}>Average: ; Count: 0; CountA: 1; Sum: 0</StatusCell>
        <StatusCell $w={143} $pad={10}>
          <ZoomRound>−</ZoomRound>
          <ZoomTrack><ZoomThumb /></ZoomTrack>
          <ZoomRound>+</ZoomRound>
        </StatusCell>
        <StatusCell $w={47} $pad={8} $last>131%</StatusCell>
      </StatusBar>

      <Panel>
        <PanelLabel $w={104}>Applications</PanelLabel>
        <PanelLabel $w={54}>Places</PanelLabel>
        {TASKS.map((t, i) => (
          <Task key={i} $dim={t.dim} $ml={t.ml}>
            <TaskIcon $dim={t.dim}>{t.icon}</TaskIcon>
            {t.label}
          </Task>
        ))}
        <Tray>
          <TrayItem $ml={7} $size={14}><Arrows>↑↓</Arrows>46.28 KB/s</TrayItem>
          <Workspace>1</Workspace>
          <TrayItem $ml={19}>
            <svg width="20" height="20" viewBox="0 0 20 20"><circle cx="10" cy="10" r="9.5" fill="#ddd" /><circle cx="10" cy="5" r="2" fill="#333" /><path d="M4 7.5h12M10 8v4M10 12l-3 5M10 12l3 5" stroke="#333" strokeWidth="1.8" /></svg>
          </TrayItem>
          <TrayItem $ml={21} $size={14.5}>Thu Dec 9</TrayItem>
          <TrayItem $ml={11} $size={14.5}>5:12 PM</TrayItem>
          <TrayItem $ml={21}>
            <svg width="16" height="16" viewBox="0 0 16 16"><circle cx="8" cy="8" r="3.5" fill="#eee" stroke="#555" /><path d="M8 0v3M8 13v3M0 8h3M13 8h3M2 2l2 2M12 12l2 2M14 2l-2 2M2 14l2-2" stroke="#ddd" /></svg>
          </TrayItem>
          <TrayItem $ml={13}>
            <svg width="16" height="14" viewBox="0 0 16 14"><path d="M1 5a10 10 0 0 1 14 0M3 8a7 7 0 0 1 10 0M5.5 10.5a3.5 3.5 0 0 1 5 0" stroke="#eee" fill="none" /><circle cx="8" cy="12.5" r="1" fill="#eee" /></svg>
          </TrayItem>
          <TrayItem $ml={11}>
            <svg width="16" height="14" viewBox="0 0 16 14"><path d="M1 5h3l4-4v12l-4-4H1z" fill="#eee" /><path d="M10 4c2 2 2 4 0 6M12 2c3 3 3 7 0 10" stroke="#ddd" fill="none" /></svg>
          </TrayItem>
          <TrayItem $ml={14}>
            <svg width="15" height="20" viewBox="0 0 15 20"><path d="M3 3h1V1h3v2h1v15H3z" fill="none" stroke="#eee" /><rect x="5" y="10" width="9" height="9" fill="#e85a1c" /><rect x="9" y="11" width="1.6" height="4" fill="#fff" /><rect x="9" y="16" width="1.6" height="1.6" fill="#fff" /></svg>
          </TrayItem>
          <TrayItem $ml={5} $size={14}>11%</TrayItem>
        </Tray>
      </Panel>
    </Window>
  );
}
